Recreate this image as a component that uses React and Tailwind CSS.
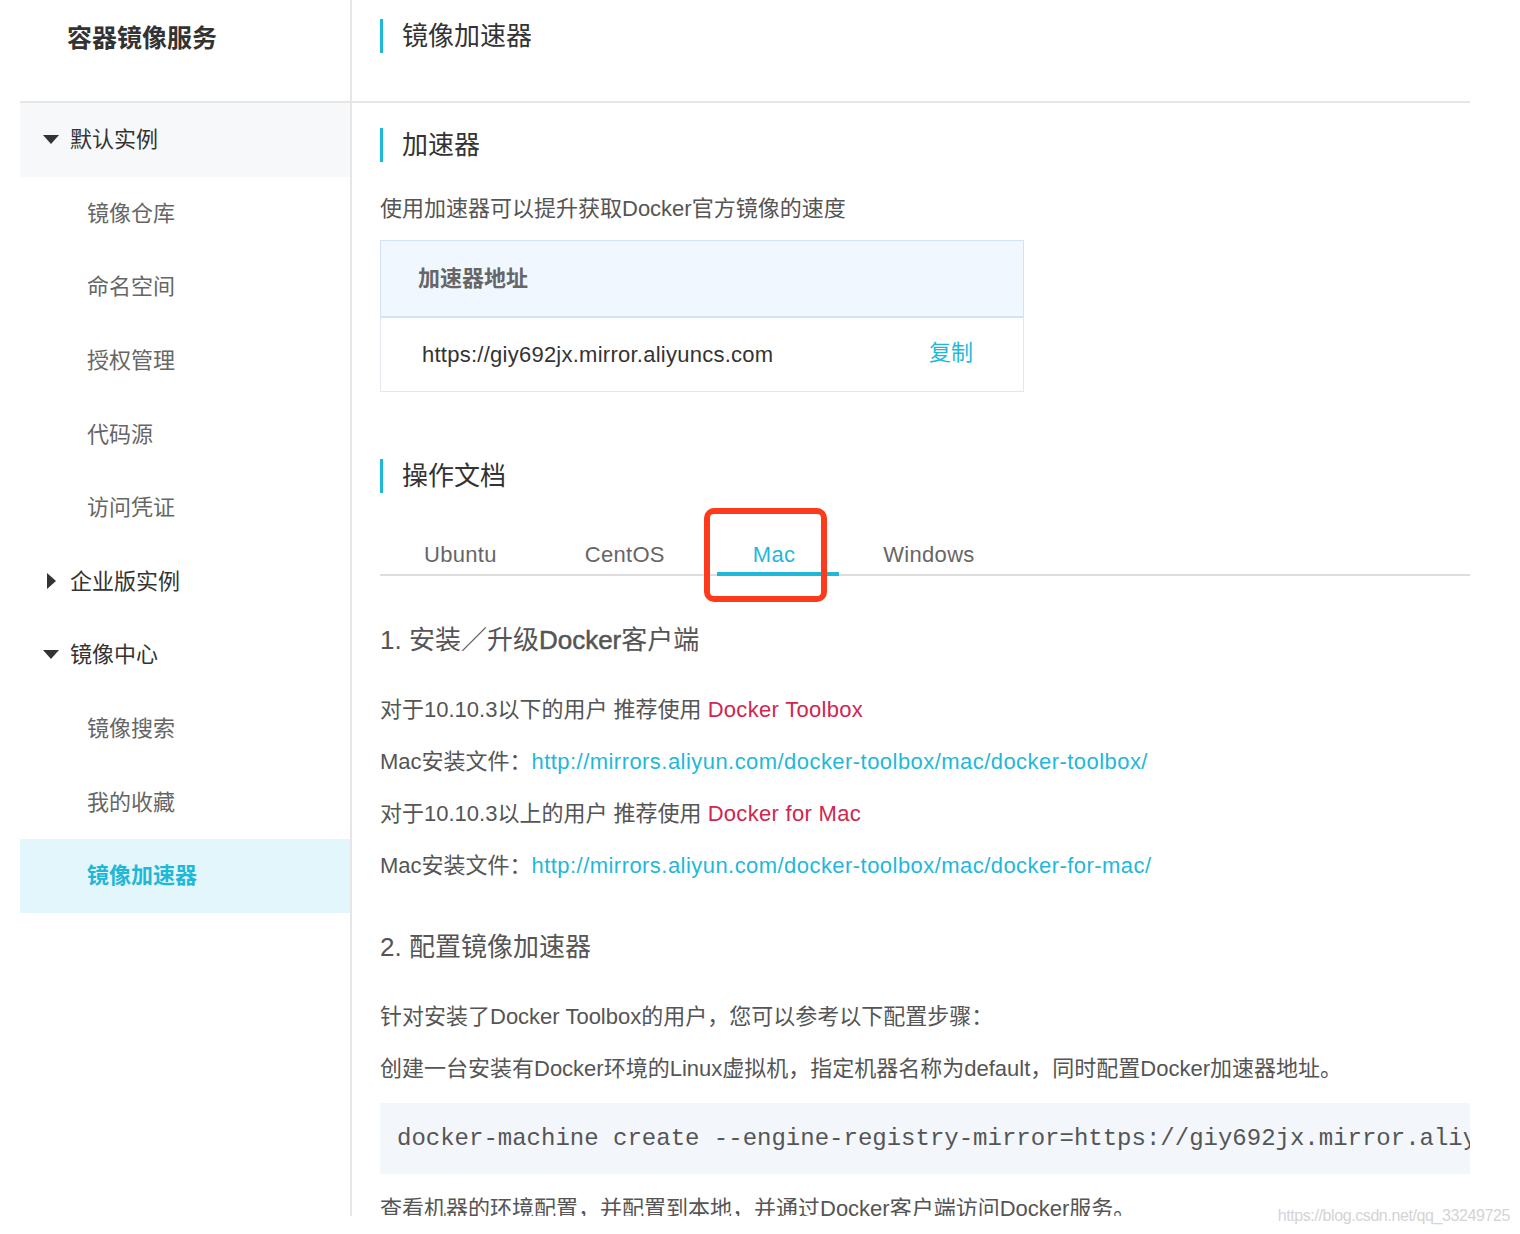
import React from 'react'

const FONT = "font-['Liberation_Sans','Noto_Sans_CJK_SC',sans-serif]"

const Heading = ({ children }) => (
  <div className="flex items-center h-[34px] border-l-[3px] border-[#1fb8d9] pl-[19px] text-[26px] leading-[34px] text-[#333]">
    {children}
  </div>
)

const Caret = ({ open }) =>
  open ? (
    <svg width="16" height="9" viewBox="0 0 16 9" className="shrink-0">
      <path d="M0 0h16L8 9z" fill="#333" />
    </svg>
  ) : (
    <span className="w-4 flex justify-center shrink-0">
      <svg width="9" height="16" viewBox="0 0 9 16">
        <path d="M0 0l9 8-9 8z" fill="#333" />
      </svg>
    </span>
  )

const GroupRow = ({ label, open, shaded }) => (
  <div className={`flex items-center h-[73.6px] pl-[23px] gap-[11px] text-[22px] text-[#333] ${shaded ? 'bg-[#f7f8fa]' : ''}`}>
    <Caret open={open} />
    <span>{label}</span>
  </div>
)

const Item = ({ label, active }) => (
  <div
    className={`flex items-center h-[73.6px] pl-[67px] text-[22px] ${
      active ? 'bg-[#e3f6fb] text-[#1fb8d9] font-bold' : 'text-[#666]'
    }`}
  >
    {label}
  </div>
)

const tabs = ['Ubuntu', 'CentOS', 'Mac', 'Windows']

const App = () => {
  return (
    <div className={`relative h-[1234px] w-[1520px] bg-white ${FONT}`}>
      <div className="h-[1216px] overflow-hidden ml-[20px] w-[1450px]">
        {/* top row */}
        <div className="flex border-b-2 border-[#e6e6e6]">
          <div className="w-[332px] h-[101px] border-r-2 border-[#e6e6e6] pl-[47px] pt-[20px]">
            <div className="text-[25px] leading-[36px] font-bold text-[#333]">容器镜像服务</div>
          </div>
          <div className="flex-1 pl-[28px] pt-[19px]">
            <Heading>镜像加速器</Heading>
          </div>
        </div>

        <div className="flex h-[1200px]">
          {/* sidebar */}
          <div className="w-[332px] shrink-0 border-r-2 border-[#e6e6e6]">
            <GroupRow label="默认实例" open shaded />
            <Item label="镜像仓库" />
            <Item label="命名空间" />
            <Item label="授权管理" />
            <Item label="代码源" />
            <Item label="访问凭证" />
            <GroupRow label="企业版实例" />
            <GroupRow label="镜像中心" open />
            <Item label="镜像搜索" />
            <Item label="我的收藏" />
            <Item label="镜像加速器" active />
          </div>

          {/* main */}
          <div className="flex-1 min-w-0 pl-[28px]">
            <div className="mt-[25px]">
              <Heading>加速器</Heading>
            </div>
            <p className="mt-[32px] text-[22px] leading-[30px] text-[#555]">使用加速器可以提升获取Docker官方镜像的速度</p>

            <div className="mt-[16px] w-[644px] border border-[#e3e8ee]">
              <div className="h-[78px] flex items-center pl-[37px] bg-[#f0f7ff] border-b-2 border-[#cfe4f8] -m-px border-x border-t">
                <span className="text-[22px] font-bold text-[#666]">加速器地址</span>
              </div>
              <div className="h-[74px] flex items-center justify-between pl-[41px] pr-[50px] text-[22px]">
                <span className="text-[#333] tracking-[0.25px]">https://giy692jx.mirror.aliyuncs.com</span>
                <span className="text-[#1fb8d9] -mt-[4px]">复制</span>
              </div>
            </div>

            <div className="mt-[67px]">
              <Heading>操作文档</Heading>
            </div>

            <div className="relative mt-[30px] flex border-b-2 border-[#dddddd]">
              {tabs.map((t) => (
                <div
                  key={t}
                  className={`relative h-[51px] pt-[12px] px-[44px] flex items-center text-[22px] tracking-[0.3px] ${
                    t === 'Mac' ? 'text-[#1fb8d9]' : 'text-[#666]'
                  }`}
                >
                  {t}
                  {t === 'Mac' && <span className="absolute left-[8px] right-0 -bottom-[2px] h-[4px] bg-[#1fb8d9]" />}
                </div>
              ))}
              <div className="absolute left-[324px] top-[-15px] w-[123px] h-[94px] border-[6px] border-[#fd3b1c] rounded-[10px]" />
            </div>

            <h3 className="mt-[46px] text-[26px] leading-[36px] text-[#555]">
              1. 安装／升级<span className="[-webkit-text-stroke:0.5px_#555]">Docker</span>客户端
            </h3>
            <div className="mt-[26px] text-[22px] leading-[52px] text-[#555]">
              <p>
                对于10.10.3以下的用户 推荐使用 <span className="text-[#d0264f] tracking-[0.3px]">Docker Toolbox</span>
              </p>
              <p>
                Mac安装文件：<span className="text-[#1fb8d9] tracking-[0.45px]">http://mirrors.aliyun.com/docker-toolbox/mac/docker-toolbox/</span>
              </p>
              <p>
                对于10.10.3以上的用户 推荐使用 <span className="text-[#d0264f] tracking-[0.3px]">Docker for Mac</span>
              </p>
              <p>
                Mac安装文件：<span className="text-[#1fb8d9] tracking-[0.45px]">http://mirrors.aliyun.com/docker-toolbox/mac/docker-for-mac/</span>
              </p>
            </div>

            <h3 className="mt-[37px] text-[26px] leading-[36px] text-[#555]">2. 配置镜像加速器</h3>
            <div className="mt-[26px] text-[22px] leading-[52px] text-[#555]">
              <p>针对安装了Docker Toolbox的用户，您可以参考以下配置步骤：</p>
              <p>创建一台安装有Docker环境的Linux虚拟机，指定机器名称为default，同时配置Docker加速器地址。</p>
            </div>

            <div className="mt-[8px] h-[71px] bg-[#f3f7fc] flex items-center pl-[17px] overflow-hidden">
              <code className="whitespace-nowrap font-['Liberation_Mono',monospace] text-[24px] text-[#555]">
                docker-machine create --engine-registry-mirror=https://giy692jx.mirror.aliyuncs.com -d virtualbox default
              </code>
            </div>

            <p className="mt-[9px] text-[22px] leading-[52px] text-[#555]">
              查看机器的环境配置，并配置到本地，并通过Docker客户端访问Docker服务。
            </p>
          </div>
        </div>
      </div>

      <div className="absolute right-[10px] top-[1204px] text-[16px] text-[#d4d4d4] tracking-tight">
        https://blog.csdn.net/qq_33249725
      </div>
    </div>
  )
}

export default App
